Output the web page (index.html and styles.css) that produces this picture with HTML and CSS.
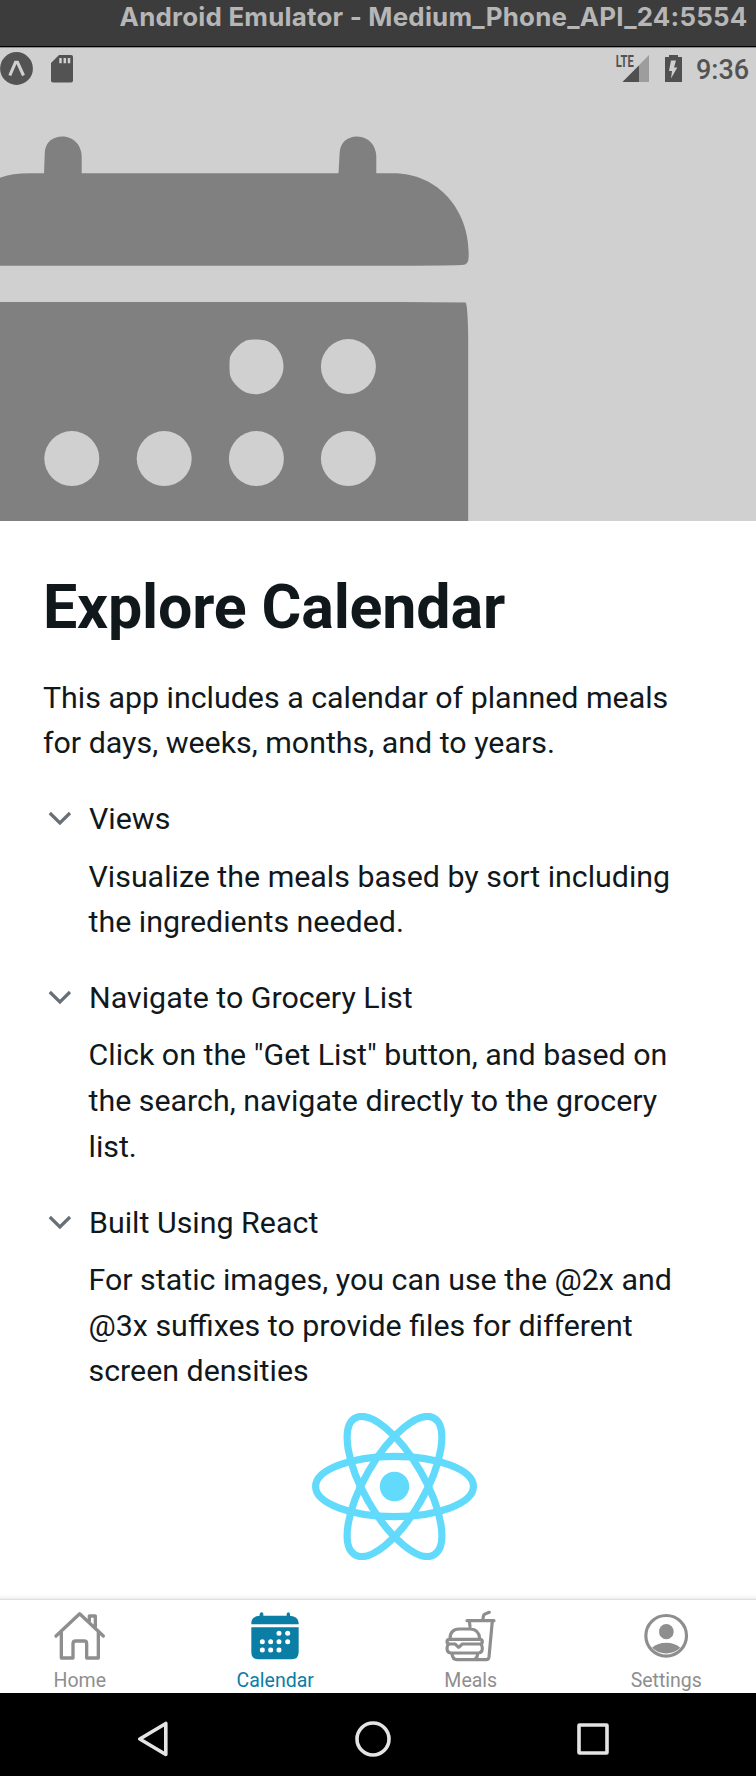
FILE: index.html
```html
<!DOCTYPE html>
<html lang="en">
<head>
<meta charset="utf-8">
<title>Explore Calendar</title>
<link rel="stylesheet" href="styles.css">
</head>
<body>
<div class="window">
  <header class="titlebar"><span class="titlebar-text">Android Emulator - Medium_Phone_API_24:5554</span></header>
  <section class="hero">
    <svg class="hero-art" viewBox="0 48 756 473">
      <path fill="#808080" d="M0 177.700Q12 173.300 30 173.300H44L44.800 152C45.500 143 52 136.600 62.500 136.600C74 136.600 81.500 146 81.700 156V173.300H338.500L339.700 152C340.500 143 347 136.600 357 136.600C369 136.600 376 146 376.300 156V173.300H393C440 173.300 468.500 212 468.700 252C468.700 261 468.500 264.500 462 265Q440 265.700 390 265.700H0Z"/>
      <path fill="#808080" d="M0 302H400L465.500 302.500C467 303 468.200 320 468.200 345V521H0Z"/>
      <g fill="#d0d0d0">
        <path d="M230 357C233 350 239 344 246 340.500C252 339 261 339 267 341C277 345 283.500 355 283.500 366.500C283.500 374 280 381 274 387C262 397 248 396 239 388C234 384 231 379 230 375C229.300 370 229.300 362 230 357Z"/>
        <circle cx="348.400" cy="366.600" r="27.500"/>
        <circle cx="71.800" cy="458.600" r="27.500"/>
        <circle cx="164.200" cy="458.600" r="27.500"/>
        <circle cx="256.400" cy="458.600" r="27.500"/>
        <circle cx="348.400" cy="458.600" r="27.500"/>
      </g>
    </svg>
    <div class="statusbar">
      <svg class="status-left" viewBox="0 48 80 44">
        <circle cx="16.500" cy="68.500" r="16.400" fill="#535353"/>
        <path d="M9.800 75.500L15.500 62.300H17.500L23.500 75.500" fill="none" stroke="#d0d0d0" stroke-width="3.100"/>
        <path fill="#535353" d="M59 55H71Q73 55 73 57V80.500Q73 82.500 71 82.500H53Q51 82.500 51 80.500V63Z"/>
        <path stroke="#d0d0d0" stroke-width="2.500" d="M60.500 58V63.300M64.800 58V63.300M69 58V63.300"/>
      </svg>
      <div class="status-right">
        <svg class="status-icons" viewBox="612 48 72 44">
          <text class="lte" x="615.700" y="66.800" textLength="18" lengthAdjust="spacingAndGlyphs">LTE</text>
          <path fill="#9d9d9d" d="M649 55V82H622.500Z"/>
          <path fill="#505050" d="M639 65.500V82H622.500Z"/>
          <path fill="#505050" d="M669 55H678V57H682V82H665V57H669Z"/>
          <path fill="#d0d0d0" d="M671 60.500H676L674 67.500H677.300L671 78.500L672 71H669Z"/>
        </svg>
        <span class="clock">9:36</span>
      </div>
    </div>
  </section>
  <main class="content">
    <h1 class="heading">Explore Calendar</h1>
    <p class="text">This app includes a calendar of planned meals<br>for days, weeks, months, and to years.</p>
    <section class="item">
      <div class="item-head"><svg class="chevron" viewBox="0 0 28 20"><path d="M3.800 4L13.900 14L24 4"/></svg><span>Views</span></div>
      <p class="text item-body">Visualize the meals based by sort including<br>the ingredients needed.</p>
    </section>
    <section class="item">
      <div class="item-head"><svg class="chevron" viewBox="0 0 28 20"><path d="M3.800 4L13.900 14L24 4"/></svg><span>Navigate to Grocery List</span></div>
      <p class="text item-body">Click on the "Get List" button, and based on<br>the search, navigate directly to the grocery<br>list.</p>
    </section>
    <section class="item">
      <div class="item-head"><svg class="chevron" viewBox="0 0 28 20"><path d="M3.800 4L13.900 14L24 4"/></svg><span>Built Using React</span></div>
      <p class="text item-body">For static images, you can use the @2x and<br>@3x suffixes to provide files for different<br>screen densities</p>
      <svg class="react-logo" viewBox="-11.500 -10.232 23 20.463">
        <circle r="2.050" fill="#61dafb"/>
        <g fill="none" stroke="#61dafb" stroke-width="1">
          <ellipse rx="11" ry="4.200"/>
          <ellipse rx="11" ry="4.200" transform="rotate(60)"/>
          <ellipse rx="11" ry="4.200" transform="rotate(120)"/>
        </g>
      </svg>
    </section>
  </main>
  <nav class="tabs">
    <a class="tab">
      <svg class="tab-icon" viewBox="150 56 180 160" fill="none" stroke="currentColor" stroke-width="10" stroke-linecap="round" stroke-linejoin="round">
        <path d="M168 137L239 70L310 137M184 126V203H219V160Q219 152 227 152H253Q260 152 260 160V203H295V126M268 92V77H286V110"/>
      </svg>
      <span>Home</span>
    </a>
    <a class="tab tab-active">
      <svg class="tab-icon" viewBox="736 56 180 160">
        <path fill="currentColor" d="M755 102V97Q756 78 780 76V71Q781 66 786 66T791 71V76H861V71Q862 66 866 66T871 71V76Q895 78 897 97V102ZM755 111H897V186Q897 207 876 207H776Q755 207 755 186Z"/>
        <g fill="#fff"><circle cx="838" cy="129" r="7.500"/><circle cx="864" cy="129" r="7.500"/><circle cx="788" cy="154" r="7.500"/><circle cx="813" cy="154" r="7.500"/><circle cx="838" cy="154" r="7.500"/><circle cx="864" cy="154" r="7.500"/><circle cx="788" cy="179" r="7.500"/><circle cx="813" cy="179" r="7.500"/><circle cx="838" cy="179" r="7.500"/></g>
      </svg>
      <span>Calendar</span>
    </a>
    <a class="tab">
      <svg class="tab-icon" viewBox="190 56 180 160" fill="none" stroke="currentColor" stroke-width="9.500" stroke-linecap="round" stroke-linejoin="round">
        <path d="M335 66L322 71Q317 73 317 79L315 90M268 91H349M275 92L277 108M344 92L334 200Q333 208 325 208H238Q225 208 223 191M217 145Q217 117 245 116H277Q305 117 306 145M216 147H306Q314 147 314 154T306 161H254L243 171L232 161H216Q208 161 208 154T216 147ZM212 163Q208 166 208 174Q208 187 219 188H303Q314 187 314 174Q314 166 310 163M300 190Q299 205 288 208"/>
      </svg>
      <span>Meals</span>
    </a>
    <a class="tab">
      <svg class="tab-icon" viewBox="774 56 180 160">
        <circle cx="864.500" cy="136.500" r="61" fill="none" stroke="currentColor" stroke-width="9.500"/>
        <ellipse cx="865" cy="124" rx="22" ry="23" fill="currentColor"/>
        <path fill="currentColor" d="M822 172C844 152 885 152 907 172A61 61 0 0 1 822 172Z"/>
      </svg>
      <span>Settings</span>
    </a>
  </nav>
  <footer class="sysnav">
    <svg class="sys-icon" viewBox="-20 -20 40 40"><path d="M-13.200 0L12.800 -15.500V15.500Z"/></svg>
    <svg class="sys-icon" viewBox="-20 -20 40 40"><circle r="16"/></svg>
    <svg class="sys-icon" viewBox="-20 -20 40 40"><rect x="-14" y="-14" width="28" height="28" rx=".5"/></svg>
  </footer>
</div>
</body>
</html>
```
FILE: styles.css
```css
* { box-sizing: border-box; }
body { margin: 0; background: #fff; font-family: Roboto, "Liberation Sans", sans-serif; color: #11181c; }
svg { display: block; }
.window { width: 756px; height: 1776px; display: flex; flex-direction: column; overflow: hidden; }
.titlebar { height: 48px; flex: none; background: #3c3c3c; border-bottom: 1px solid #8e8e8e; box-shadow: inset 0 -1px #000; padding: 0 8.500px 0 0; text-align: right; color: #b6b6b6; white-space: nowrap; }
.titlebar-text { font: 700 25.900px/34px Inter, "Liberation Sans", sans-serif; letter-spacing: .22px; display: block; }
.hero { height: 473px; flex: none; background: #d0d0d0; position: relative; }
.hero-art { width: 756px; height: 473px; }
.statusbar { position: absolute; inset: 0 0 auto 0; height: 44px; display: flex; justify-content: space-between; }
.status-left { width: 80px; height: 44px; }
.status-right { display: flex; }
.status-icons { width: 72px; height: 44px; }
.lte { font: 700 16px Roboto, sans-serif; fill: #535353; }
.clock { width: 72px; padding-left: 12px; font-size: 27px; line-height: 45px; font-weight: 500; color: #535353; }
.content { flex: 1; min-height: 0; padding: 55.500px 43px 0; }
.heading { margin: 0 0 37.200px; font-size: 60.900px; line-height: 61px; font-weight: 700; letter-spacing: -.15px; white-space: nowrap; }
.text { margin: 0; font-size: 30.360px; line-height: 45.600px; white-space: nowrap; }
.item { margin-top: 30.500px; }
.item-head { display: flex; align-items: center; font-size: 30.400px; line-height: 45.600px; padding-left: 3px; gap: 15px; }
.chevron { width: 28px; height: 20px; }
.chevron path { fill: none; stroke: #687076; stroke-width: 3.200; }
.item-body { margin-top: 11.600px; padding-left: 45.500px; }
.react-logo { width: 165px; height: 147px; margin: 19px auto 0 269.300px; }
.tabs { flex: none; height: 94px; width: 782px; margin-left: -18px; background: #fff; border-top: 1px solid #e0e0e0; box-shadow: 0 -1px 4px rgba(0,0,0,.1); display: flex; }
.tab { width: 195.500px; display: flex; flex-direction: column; align-items: center; padding-top: 8.500px; color: #8e8e8f; font-size: 19.500px; line-height: 22px; gap: 8.500px; }
.tab-active { color: #0a7ea4; }
.tab-icon { width: 60px; height: 53.330px; }
.sysnav { flex: none; height: 83px; background: #000; display: flex; gap: 180px; padding: 25.500px 0 0 133px; }
.sys-icon { width: 40px; height: 40px; }
.sys-icon * { fill: none; stroke: #e4e4e4; stroke-width: 3.600; stroke-linejoin: round; }
```
